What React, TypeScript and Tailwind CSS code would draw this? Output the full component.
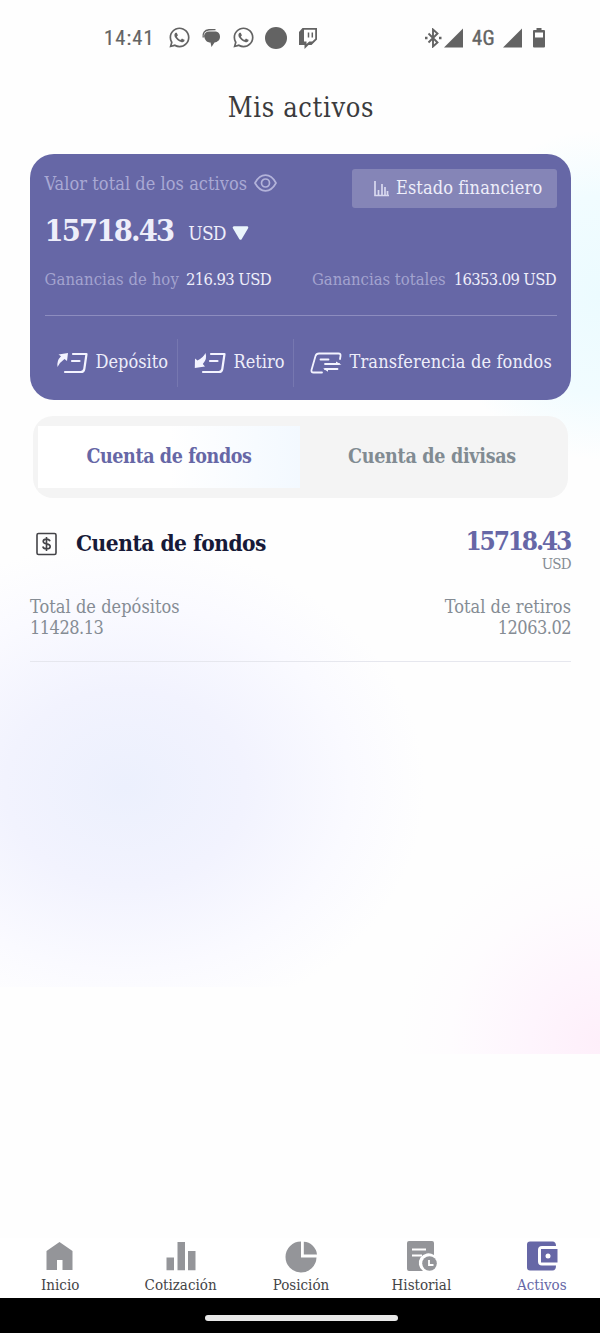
import React from 'react';
import { FaWhatsapp } from 'react-icons/fa';

const actions = [
  { label: 'Depósito', icon: <DepositIcon />, className: 'w-[133px] pl-[11px]' },
  { label: 'Retiro', icon: <WithdrawIcon />, className: 'w-[116px] pl-[16px]' },
  { label: 'Transferencia de fondos', icon: <TransferIcon />, className: 'flex-1 pl-[16px] tracking-[0.15px]' },
];

const navItems = [
  { label: 'Inicio', icon: <HomeIcon /> },
  { label: 'Cotización', icon: <BarsIcon /> },
  { label: 'Posición', icon: <PieIcon /> },
  { label: 'Historial', icon: <HistoryIcon /> },
  { label: 'Activos', icon: <WalletIcon />, active: true },
];

export default function App() {
  return (
    <div className="relative isolate flex h-[1333px] w-[600px] flex-col overflow-hidden bg-[#fefefe] font-['DejaVu_Serif_Condensed','DejaVu_Serif',serif] [font-stretch:condensed]">
      <Background />
      <StatusBar />

      <h1 className="mt-[13px] h-[37px] pl-[2px] text-center text-[27px] leading-[38px] tracking-[0.65px] text-[#3b3b3d]">Mis activos</h1>

      <main className="flex flex-1 flex-col pt-[28px] pr-[29px] pl-[30px]">
        <section className="h-[246px] rounded-[24px] bg-[#6667a6] pr-[14px] pl-[14.5px] text-[#eeeefa]">
          <div className="flex h-[100px] justify-between pt-[15px]">
            <div>
              <div className="flex h-[28px] items-center text-[18px] text-[#a9a9d4]">
                <span className="tracking-[0.05px]">Valor total de los activos</span>
                <EyeIcon />
              </div>
              <div className="mt-[12px] flex h-[42px] items-center">
                <span className="text-[30.5px] leading-[42px] font-bold tracking-[-1.8px]">15718.43</span>
                <span className="mt-[6px] ml-[15px] text-[19px] tracking-[-0.8px]">USD</span>
                <svg className="mt-[7px] ml-[6px]" width="17" height="15" viewBox="0 0 17 15">
                  <path d="M2 1.500h13L8.500 12.500z" fill="#eaf5fb" stroke="#eaf5fb" strokeWidth="2.600" strokeLinejoin="round" />
                </svg>
              </div>
            </div>
            <button className="flex h-[39px] w-[205px] items-center rounded-[3px] bg-[#8585b7] pl-[22px] text-[18px]">
              <svg width="15" height="16" viewBox="0 0 15 16" fill="none" stroke="#d9d9ef" strokeWidth="1.700">
                <path d="M1 0v14.500H15M4.500 14V9M8 14V3M11 14V6M13.500 14V10" />
              </svg>
              <span className="mb-[2px] ml-[7px] tracking-[0.1px]">Estado financiero</span>
            </button>
          </div>

          <div className="flex h-[62px] items-center justify-between border-b border-[#8d8dbf] pb-[9px] text-[16.5px]">
            <p><span className="tracking-[0.1px] text-[#a3a3cf]">Ganancias de hoy</span><span className="ml-[7px] tracking-[-0.6px]">216.93 USD</span></p>
            <p className="pr-px"><span className="text-[#a3a3cf]">Ganancias totales</span><span className="ml-[8px] tracking-[-0.65px]">16353.09 USD</span></p>
          </div>

          <div className="mt-[23px] flex h-[48px] divide-x divide-[#7677b0] text-[18px]">
            {actions.map((a) => (
              <button key={a.label} className={`flex items-center whitespace-nowrap ${a.className}`}>
                {a.icon}
                <span className="mb-[3px] ml-[8px]">{a.label}</span>
              </button>
            ))}
          </div>
        </section>

        <div className="mt-[16px] ml-[3px] flex h-[82px] w-[535px] rounded-[20px] bg-[#f4f4f4] py-[10px] pl-[5px] text-[19.5px] font-bold">
          <button className="h-[62px] w-[262px] bg-linear-to-r from-white from-50% to-[#f3f9ff] tracking-[-0.4px] text-[#6667a6]">Cuenta de fondos</button>
          <button className="h-[62px] flex-1 pr-[4px] tracking-[-0.28px] text-[#818b92]">Cuenta de divisas</button>
        </div>

        <section className="mt-[28px] h-[136px] border-b border-[#e6e7ee] text-[#858c94]">
          <div className="flex h-[60px] justify-between">
            <div className="flex h-[38px] items-center text-[22.5px] font-bold tracking-[-0.5px] text-[#171a38]">
              <svg className="mb-[2px] ml-[6px]" width="21" height="24" viewBox="0 0 21 24" fill="none" stroke="#444448" strokeWidth="1.600">
                <rect x="1" y="1.500" width="19" height="21" rx="1.500" />
                <path d="M14 9.300c-.5-1.600-1.700-2.200-3.500-2.200-2 0-3.300.8-3.300 2.300 0 3.400 7 1.500 7 5 0 1.500-1.500 2.400-3.700 2.400-2 0-3.400-.8-3.700-2.300M10.500 5v14" />
              </svg>
              <h2 className="mb-[2px] ml-[19px]">Cuenta de fondos</h2>
            </div>
            <div className="text-right">
              <p className="h-[31px] text-[26px] leading-[31px] font-bold tracking-[-2.2px] text-[#6667a6]"><span className="mr-[1px]">15718.43</span></p>
              <p className="text-[15px] leading-[15px] tracking-[-0.7px]">USD</p>
            </div>
          </div>
          <div className="mt-[10px] flex justify-between text-[18px] leading-[21px]">
            <div><p className="tracking-[0.05px]">Total de depósitos</p><p className="tracking-[-0.5px]">11428.13</p></div>
            <div className="text-right"><p className="tracking-[0.05px]">Total de retiros</p><p className="tracking-[-0.5px]">12063.02</p></div>
          </div>
        </section>
      </main>

      <nav className="grid h-[60px] w-[602px] grid-cols-5 bg-white text-[15px] text-[#444447]">
        {navItems.map((item) => (
          <button key={item.label} className={item.active ? 'flex flex-col items-center text-[#6667a6]' : 'flex flex-col items-center'}>
            {item.icon}
            <span className="mt-[2px] leading-[20px]">{item.label}</span>
          </button>
        ))}
      </nav>
      <div className="flex h-[35px] items-center justify-center bg-black pt-[5px] pl-[2px]">
        <div className="h-[6px] w-[193px] rounded-full bg-[#e8e8e8]" />
      </div>
    </div>
  );
}

function Background() {
  return (
    <div className="absolute inset-0 -z-10">
      <div className="absolute top-[540px] left-0 h-[447px] w-[600px] bg-[radial-gradient(ellipse_300px_245px_at_125px_247px,#ecf0fd_0%,#f2f3fe_40%,#fafaff_75%,#fefefe_100%)]" />
      <div className="absolute top-[840px] right-0 h-[214px] w-[220px] bg-[radial-gradient(ellipse_200px_200px_at_220px_204px,#feeffa_0%,#fef5fd_35%,#fefcfe_75%,transparent_100%)]" />
      <div className="absolute top-[130px] right-0 h-[330px] w-[160px] bg-[radial-gradient(ellipse_160px_165px_at_160px_165px,#ecfbff_0%,#f1fcff_60%,#fefefe_100%)]" />
    </div>
  );
}

function StatusBar() {
  return (
    <header className="flex h-[76px] items-center pl-[104px] font-[Roboto,sans-serif] text-[20.5px] text-[#636363]">
      <span className="w-[64px] tracking-[1.1px] [-webkit-text-stroke:0.2px_#636363]">14:41</span>
      <FaWhatsapp className="mb-px" size={23} />
      <svg className="ml-[10px]" width="20" height="20" viewBox="0 0 20 20">
        <path d="M8 3.500h6c3.200 0 5 2.200 5 5.200 0 3.300-2.500 5.300-5.500 5.800L10.500 19l-1-4.500C6 14.500 4 12.500 3 8c.5-3 2-4.500 5-4.500z" fill="currentColor" />
        <path d="M2.200 9.500C1.500 5 3.500 2.200 8 1.700L14.500 1.600" fill="none" stroke="currentColor" strokeWidth="1.400" />
      </svg>
      <FaWhatsapp className="mb-px ml-[11px]" size={23} />
      <div className="ml-[10px] size-[22px] rounded-full bg-[#636363]" />
      <svg className="ml-[11px]" width="20" height="21" viewBox="0 0 20 21">
        <path d="M4.500 0H19v11.500l-5.500 5.500h-3l-4 4v-4H1V4z" fill="currentColor" />
        <path d="M6 1.800h11.200v9L14.200 13.500h-3L8.500 16v-2.500H6z" fill="#fff" />
        <path d="M10.500 4.500v5M14.300 4.500v5" stroke="currentColor" strokeWidth="1.500" />
      </svg>
      <svg className="ml-[107px]" width="17" height="20" viewBox="0 0 17 20" fill="none" stroke="currentColor" strokeWidth="1.900">
        <path d="M3.500 5.500l9 9-4.500 4V1.500l4.500 4-9 9" />
        <path d="M0 10h2.500M14 10h2.500" strokeWidth="2.400" />
      </svg>
      <Signal className="ml-[2px]" />
      <span className="ml-[8px] w-[27px] tracking-[0.5px] [-webkit-text-stroke:0.4px_#636363]">4G</span>
      <Signal className="ml-[4px]" />
      <svg className="ml-[10px]" width="12" height="20" viewBox="0 0 12 20">
        <path d="M3.500 0h5v2H11q1 0 1 1v15.500q0 1-1 1H1q-1 0-1-1V3q0-1 1-1h2.500z" fill="currentColor" />
        <path d="M2 4.500h8v5H2z" fill="#fff" />
      </svg>
    </header>
  );
}

function Signal({ className }: { className: string }) {
  return (
    <svg className={className} width="20" height="20" viewBox="0 0 20 20">
      <path d="M0 19.500L19 .5v19z" fill="currentColor" />
    </svg>
  );
}

function EyeIcon() {
  return (
    <svg className="ml-[7px]" width="23" height="18" viewBox="0 0 23 18" fill="none" stroke="#b3b3da" strokeWidth="1.700">
      <path d="M1 9C4 3.500 7.500 1.200 11.500 1.200S19 3.500 22 9c-3 5.500-6.500 7.800-10.500 7.800S4 14.500 1 9z" strokeLinejoin="round" />
      <circle cx="11.500" cy="9" r="4" />
    </svg>
  );
}

function DepositIcon() {
  return (
    <svg width="32" height="24" viewBox="0 0 32 24" fill="none" stroke="#f3f3ff" strokeWidth="2.200">
      <path d="M17 3h13.500l-2.200 15q-.5 3-3.500 3H9M16 10h7.500" strokeLinecap="round" strokeLinejoin="round" />
      <path d="M2.500 3.500L12 2l-1 8-2.500-2Q3.500 11.500 1.500 16 .5 9.500 5 5.200z" fill="#f3f3ff" stroke="none" />
    </svg>
  );
}

function WithdrawIcon() {
  return (
    <svg width="32" height="24" viewBox="0 0 32 24" fill="none" stroke="#f3f3ff" strokeWidth="2.200">
      <path d="M17 3h13.500l-2.200 15q-.5 3-3.500 3H9M16 10h7.500" strokeLinecap="round" strokeLinejoin="round" />
      <path d="M1 7.500l2.500 2Q9 7 11.500 2q2 6-2.700 11l2.200 2.500L.8 17z" fill="#f3f3ff" stroke="none" />
    </svg>
  );
}

function TransferIcon() {
  return (
    <svg width="32" height="24" viewBox="0 0 32 24" fill="none" stroke="#f3f3ff" strokeWidth="1.800" strokeLinecap="round" strokeLinejoin="round">
      <path d="M12 21.500H3.500q-2.500 0-2-2.500L5.500 5q.8-2.500 3.500-2.500h19.500q2.500 0 2 2.500l-.5 3M10.500 8.500h8M15 13h14M27.500 18H15" />
      <path d="M26 10.500l5.500 3.300H26zM18 17.500v3.200l-5-3.200z" fill="#f3f3ff" stroke="none" />
    </svg>
  );
}

function HomeIcon() {
  return (
    <svg width="30" height="35" viewBox="0 0 30 35">
      <path d="M14.500 4L27.500 13v19H17.500V22h-5.500v10H1.500V13z" fill="#949599" />
    </svg>
  );
}

function BarsIcon() {
  return (
    <svg width="30" height="35" viewBox="0 0 30 35" fill="#949599">
      <path d="M.5 19.500h7.500v12.800H.500zM11.500 4H19v28.300h-7.500zM22 13h7.500v19.300H22z" />
    </svg>
  );
}

function PieIcon() {
  return (
    <svg width="32" height="35" viewBox="0 0 32 35" fill="#949599">
      <path d="M16 3.500V19.500h15.500A15.500 15.500 0 1 1 16 3.500z" />
      <path d="M18.800 3.800A14 14 0 0 1 32 16.500H18.800z" />
    </svg>
  );
}

function HistoryIcon() {
  return (
    <svg width="32" height="35" viewBox="0 0 32 35" fill="#949599">
      <path d="M4 3h23q2 0 2 2v12a9 9 0 0 0-11 16H4q-2 0-2-2V5q0-2 2-2z" />
      <path d="M7 11.500h14M7 17.500h10" stroke="#fff" strokeWidth="1.900" />
      <circle cx="24.500" cy="25.500" r="7.300" />
      <path d="M24 22v5h4.500" fill="none" stroke="#fff" strokeWidth="1.800" />
    </svg>
  );
}

function WalletIcon() {
  return (
    <svg width="32" height="35" viewBox="0 0 32 35" fill="#6667a6">
      <path d="M4 3.500h22.500q3.500 0 3.500 4.500H16q-4 0-4 4v11.500q0 4 4 4h14q0 5-3.500 5H4q-3 0-3-3v-23q0-3 3-3z" />
      <path d="M15 11h16.500v13.500H15z" />
      <circle cx="22" cy="18" r="2.500" fill="#fff" />
    </svg>
  );
}
